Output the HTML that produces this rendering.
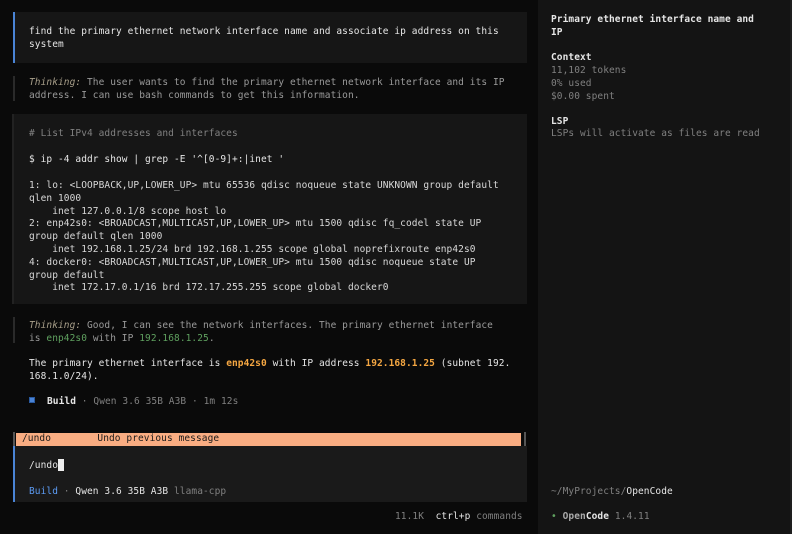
<!DOCTYPE html>
<html><head><meta charset="utf-8"><style>
*{margin:0;padding:0;box-sizing:border-box}
body{width:792px;height:534px;background:#0a0a0a;position:relative;overflow:hidden;font-family:"DejaVu Sans Mono","Liberation Mono",monospace;font-size:9.5px;line-height:12.8px;color:#e6e6e6;letter-spacing:0.08px}
.a{position:absolute;white-space:pre;margin-top:2px}
.box{position:absolute}
.g{color:#808080}
.t{color:#a89f8a;font-style:italic}
.gr{color:#5fa05f}
.o{color:#f5a742;font-weight:bold}
.b{font-weight:bold}
.bl{color:#5c9cf5}
</style></head><body>
<div class="box" style="left:538px;top:0;width:252px;height:534px;background:#141414"></div>
<div class="box" style="left:790px;top:0;width:2px;height:534px;background:#1e1e1e"></div>

<div class="box" style="left:13px;top:12px;width:514px;height:51px;background:#161616;border-left:2px solid #4a84d6"></div>
<div class="a" style="left:29px;top:24px">find the primary ethernet network interface name and associate ip address on this
system</div>

<div class="box" style="left:13px;top:76px;width:2px;height:25px;background:#2a2a2a"></div>
<div class="a" style="left:29px;top:75px;color:#9a9a9a"><span class="t">Thinking:</span> The user wants to find the primary ethernet network interface and its IP
address. I can use bash commands to get this information.</div>

<div class="box" style="left:12px;top:114px;width:515px;height:190px;background:#161616;border-left:2px solid #222"></div>
<div class="a g" style="left:29px;top:126px">#&nbsp;List IPv4 addresses and interfaces</div>
<div class="a" style="left:29px;top:152px">$ ip -4 addr show | grep -E '^[0-9]+:|inet '</div>
<div class="a" style="left:29px;top:178px;color:#d8d8d8">1: lo: &lt;LOOPBACK,UP,LOWER_UP&gt; mtu 65536 qdisc noqueue state UNKNOWN group default
qlen 1000
    inet 127.0.0.1/8 scope host lo
2: enp42s0: &lt;BROADCAST,MULTICAST,UP,LOWER_UP&gt; mtu 1500 qdisc fq_codel state UP
group default qlen 1000
    inet 192.168.1.25/24 brd 192.168.1.255 scope global noprefixroute enp42s0
4: docker0: &lt;BROADCAST,MULTICAST,UP,LOWER_UP&gt; mtu 1500 qdisc noqueue state UP
group default
    inet 172.17.0.1/16 brd 172.17.255.255 scope global docker0</div>

<div class="box" style="left:13px;top:317px;width:2px;height:26px;background:#2a2a2a"></div>
<div class="a" style="left:29px;top:318px;color:#9a9a9a"><span class="t">Thinking:</span> Good, I can see the network interfaces. The primary ethernet interface
is <span class="gr">enp42s0</span> with IP <span class="gr">192.168.1.25</span>.</div>

<div class="a" style="left:29px;top:356px">The primary ethernet interface is <span class="o">enp42s0</span> with IP address <span class="o">192.168.1.25</span> (subnet 192.
168.1.0/24).</div>

<div class="box" style="left:29px;top:397px;width:6px;height:6px;background:#4a84d6;border:1px solid #2a5aa0"></div>
<div class="a" style="left:47px;top:394px"><span class="b">Build</span><span class="g"> · Qwen 3.6 35B A3B · 1m 12s</span></div>

<div class="box" style="left:13px;top:432px;width:2px;height:14px;background:#555"></div>
<div class="box" style="left:524px;top:432px;width:2px;height:14px;background:#555"></div>
<div class="box" style="left:16px;top:433px;width:505px;height:13px;background:#f9ad82"></div>
<div class="a" style="left:22px;top:431px;color:#1a1a1a">/undo        Undo previous message</div>

<div class="box" style="left:13px;top:446px;width:514px;height:56px;background:#1a1a1a;border-left:2px solid #4a84d6"></div>
<div class="a" style="left:29px;top:458px">/undo</div>
<div class="box" style="left:58px;top:459px;width:6px;height:12px;background:#eee"></div>
<div class="a" style="left:29px;top:484px"><span class="bl">Build</span><span class="g"> · </span>Qwen 3.6 35B A3B <span class="g">llama-cpp</span></div>

<div class="a" style="left:395px;top:509px"><span class="g">11.1K</span>  ctrl+p <span class="g">commands</span></div>

<div class="a b" style="left:551px;top:12px">Primary ethernet interface name and
IP</div>
<div class="a b" style="left:551px;top:50px">Context</div>
<div class="a g" style="left:551px;top:63px">11,102 tokens
0% used
$0.00 spent</div>
<div class="a b" style="left:551px;top:114px">LSP</div>
<div class="a g" style="left:551px;top:126px">LSPs will activate as files are read</div>
<div class="a" style="left:551px;top:484px"><span class="g">~/MyProjects/</span>OpenCode</div>
<div class="a" style="left:551px;top:509px"><span style="color:#5fa05f">•</span> <span class="b" style="color:#aaa">Open</span><span class="b">Code</span> <span class="g">1.4.11</span></div>
</body></html>
